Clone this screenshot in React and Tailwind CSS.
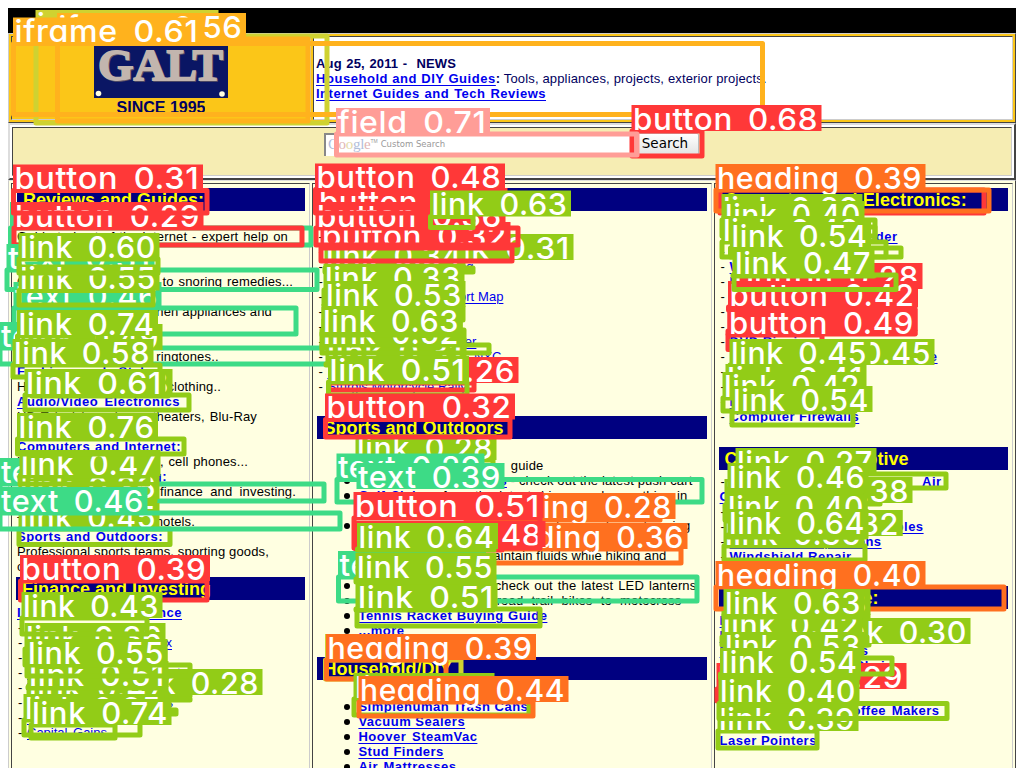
import React from "react";

const COLORS = {
  button: "#ff3838",
  link: "#92cc17",
  text: "#3ddb86",
  heading: "#ff701f",
  iframe: "#ffb21d",
  image: "#cfd231",
  field: "#ff9d97",
};
const LABEL_WIDTH = { button: 190, link: 141, text: 148, heading: 210, iframe: 189, image: 183, field: 154 };

// kind, score, x1, y1, x2, y2, painted from back to front
const DETECTIONS = [
  ["image", "0.29", 36, 36, 327, 123],
  ["iframe", "0.56", 57.5, 39, 308, 121],
  ["iframe", "0.61", 13.5, 43.5, 762.5, 114.5],
  ["button", "0.68", 632, 131, 702, 156],
  ["field", "0.71", 336.5, 134, 637, 155],

  ["text", "0.39", 10.5, 228, 311, 245],
  ["button", "0.29", 14, 228, 302, 245],
  ["button", "0.31", 13.5, 190.5, 207, 213],
  ["text", "0.31", 7, 270, 317, 289.5],
  ["text", "0.46", 14, 308, 296, 334],
  ["text", "0.35", 0, 348, 337, 364],
  ["link", "0.55", 19, 290.5, 153, 305],
  ["link", "0.60", 19, 259, 158, 273],
  ["link", "0.49", 22, 350, 95, 362],
  ["link", "0.74", 17.5, 336, 93, 349],
  ["link", "0.38", 32, 395, 168, 396],
  ["link", "0.58", 13, 365, 160, 377],
  ["link", "0.61", 25, 395, 189, 410],
  ["text", "0.39", 0, 484, 324, 501],
  ["link", "0.36", 19, 499, 155, 501],
  ["link", "0.47", 20, 476, 148, 484],
  ["link", "0.76", 17.5, 439, 184, 454],
  ["link", "0.45", 19, 529, 170, 544.5],
  ["text", "0.46", 0, 513, 340, 529],
  ["button", "0.39", 20.5, 581, 207, 600],
  ["link", "0.36", 25, 649, 165, 665],
  ["link", "0.43", 22, 618, 147, 634],
  ["link", "0.28", 122, 695, 190, 696],
  ["link", "0.37", 27, 710, 176, 714],
  ["link", "0.47", 28, 699, 190, 700],
  ["link", "0.51", 28, 687, 160, 688],
  ["link", "0.55", 27, 665, 190, 676],
  ["link", "0.35", 24, 720, 140, 735],
  ["link", "0.74", 31, 725, 115, 738],

  ["button", "0.42", 318, 214, 505, 214],
  ["link", "0.31", 433, 260, 512, 260],
  ["link", "0.34", 325, 268, 473, 272],
  ["button", "0.32", 321, 248, 512, 261],
  ["button", "0.36", 316, 228, 518, 245],
  ["button", "0.48", 315.5, 189.5, 503, 213],
  ["link", "0.63", 430.5, 216.5, 473, 227.5],
  ["link", "0.41", 322, 330, 464, 348],
  ["link", "0.33", 324, 290, 462, 305],
  ["link", "0.53", 325, 307, 463, 320],
  ["link", "0.31", 326, 364, 491, 365],
  ["link", "0.52", 322, 345, 489, 353],
  ["link", "0.63", 322, 333, 463, 335],
  ["button", "0.26", 329, 383, 474, 390],
  ["link", "0.51", 328.5, 382, 467, 395],
  ["link", "0.28", 356, 460, 493, 466],
  ["button", "0.32", 325.5, 419.5, 510, 437],
  ["text", "0.29", 337, 479.5, 702, 502],
  ["text", "0.39", 357, 489, 501, 489],
  ["heading", "0.28", 466, 519, 660, 520],
  ["heading", "0.36", 478, 549, 681, 563],
  ["button", "0.48", 356, 547, 502, 550],
  ["button", "0.51", 354, 518, 540, 548],
  ["text", "0.35", 338.5, 577, 697, 601],
  ["link", "0.54", 356, 609, 493, 610],
  ["link", "0.51", 357, 609, 540, 626],
  ["link", "0.55", 356, 579, 494, 582],
  ["link", "0.64", 357.5, 549, 494, 550],
  ["image", "0.31", 325.5, 660, 461, 679],
  ["heading", "0.39", 326.5, 660, 446, 679],
  ["link", "0.28", 354, 699, 529, 715],
  ["heading", "0.44", 359, 702, 533, 716],

  ["button", "0.34", 720, 190, 984, 213],
  ["heading", "0.39", 716, 190, 989, 211],
  ["link", "0.29", 722, 220, 875, 236],
  ["link", "0.40", 724, 227, 875, 241],
  ["link", "0.42", 722, 242, 886, 257],
  ["button", "0.28", 733, 289, 915, 290],
  ["link", "0.47", 733, 275, 874, 276],
  ["link", "0.54", 730.5, 248, 901, 257],
  ["button", "0.34", 728, 331, 915, 334],
  ["button", "0.42", 728.5, 307, 913, 310],
  ["link", "0.47", 734, 275, 896, 289.5],
  ["button", "0.49", 728, 335, 822, 349.5],
  ["link", "0.45", 794, 365, 850, 365],
  ["link", "0.45", 730, 365, 862, 367],
  ["link", "0.41", 726, 390, 863, 395],
  ["link", "0.42", 723, 398, 855, 411],
  ["link", "0.54", 732, 412, 853, 425],
  ["link", "0.27", 736, 474, 946, 488],
  ["link", "0.38", 772, 503, 880, 504],
  ["link", "0.42", 725, 505, 865, 520],
  ["link", "0.36", 724, 546, 865, 560],
  ["link", "0.32", 762, 536, 913, 530],
  ["link", "0.40", 727, 519, 880, 521],
  ["link", "0.32", 762, 536, 866, 537],
  ["link", "0.64", 728, 535, 860, 537],
  ["link", "0.46", 728, 489, 862, 492],
  ["heading", "0.40", 716, 587, 1004, 609],
  ["link", "0.33", 730, 615, 868, 618],
  ["link", "0.30", 830, 644, 869, 645],
  ["link", "0.42", 722, 637, 867, 645],
  ["link", "0.63", 724, 615, 861, 617],
  ["button", "0.29", 717, 689, 850, 701],
  ["link", "0.53", 724, 658, 892, 674],
  ["link", "0.54", 720.5, 674, 858, 678],
  ["link", "0.39", 718, 731, 817, 748],
  ["link", "0.40", 719, 703.5, 947, 718.5],
];

function Detection({ kind, score, x1, y1, x2, y2 }) {
  const c = COLORS[kind];
  const w = LABEL_WIDTH[kind];
  return (
    <g>
      <rect x={x1} y={y1} width={Math.max(x2 - x1, 0)} height={Math.max(y2 - y1, 0)} fill="none" stroke={c} strokeWidth="5" strokeLinejoin="round" />
      <rect x={x1 - 0.5} y={y1 - 26} width={w} height="26" fill={c} />
      <text
        x={x1 + 1}
        y={y1 - 1.5}
        textLength={w - 5}
        lengthAdjust="spacingAndGlyphs"
        fill="#fff"
        className="font-['Inter',sans-serif] text-[30.5px] font-medium tracking-[0.6px] [font-feature-settings:'cv11'] [word-spacing:6px]"
      >
        {kind} {score}
      </text>
    </g>
  );
}

const L = "font-bold text-[#0000ee] underline underline-offset-2";
const P = "text-[#0000ee] underline underline-offset-2";

function Row({ children, w, dash, bullet, link, thin }) {
  return (
    <div className="flex h-[15px] items-center whitespace-nowrap text-[13px] leading-[15px]">
      {dash && <span className="w-[10px] shrink-0 pl-px">-</span>}
      {bullet && <span className="mr-[8px] ml-[27px] size-[6px] shrink-0 rounded-full bg-black" />}
      {bullet === false && <span className="w-[41px] shrink-0" />}
      <span
        className={`block shrink-0 [text-align-last:justify] ${link ? `${L} tracking-[0.5px]` : thin ? P : "tracking-[0.15px]"}`}
        style={{ width: w || "auto" }}
      >
        {children}
      </span>
    </div>
  );
}

function Band({ children, className = "" }) {
  return (
    <h2 className={`flex h-[23px] items-center bg-[#000080] pt-px pl-[6px] text-[18px] leading-[22px] font-bold whitespace-nowrap text-[#ffff00] ${className}`}>
      {children}
    </h2>
  );
}

const CELL = "border border-t-[#444] border-r-[#ccc] border-b-[#ccc] border-l-[#444]";

export default function App() {
  return (
    <div className="relative h-[768px] w-[1024px] overflow-hidden bg-white px-2 pt-2 font-['Liberation_Sans',Arial,sans-serif] text-black">
      <div className="h-[25px] bg-black" />
      <header className="flex h-[90px] gap-[2px] border border-t-[#ccc] border-r-[#444] border-b-[#444] border-l-[#ccc] bg-[#fbc618] p-[2px]">
        <div className={`flex w-[300px] flex-col items-center overflow-hidden pt-[8px] ${CELL}`}>
          <svg width="134" height="53" viewBox="0 0 134 53" className="shrink-0">
            <rect width="134" height="53" fill="#0a1664" />
            <text x="5" y="36" textLength="125" lengthAdjust="spacingAndGlyphs" fill="#5b5364" stroke="#5b5364" strokeWidth="1.5" className="font-['Liberation_Serif',serif] text-[44px] font-bold">GALT</text>
            <text x="4" y="34.5" textLength="125" lengthAdjust="spacingAndGlyphs" fill="#c2b5ae" stroke="#c2b5ae" strokeWidth="1.8" className="font-['Liberation_Serif',serif] text-[44px] font-bold">GALT</text>
            <circle cx="4.5" cy="48.5" r="2.8" fill="#ffffe1" />
            <circle cx="128" cy="49" r="2.8" fill="#ffffe1" />
          </svg>
          <div className="h-[14px] shrink-0 overflow-hidden text-[16px] leading-[19px] font-bold text-[#000060]">SINCE 1995</div>
        </div>
        <div className={`flex-1 bg-white pt-[19px] pl-[2px] text-[#000060] ${CELL}`}>
          <Row w={140}><b>Aug 25, 2011 -&nbsp; NEWS</b></Row>
          <Row w={450}><a className={`${L} tracking-[0.55px]`}>Household and DIY Guides</a><b>:</b> Tools, appliances, projects, exterior projects.</Row>
          <Row w={230} link>Internet Guides and Tech Reviews</Row>
        </div>
      </header>
      <div className="h-[57px] border-2 border-t-[#ddd] border-r-[#444] border-b-[#444] border-l-[#ddd] bg-white p-[2px]">
        <div className={`flex h-full items-start bg-[#f6edb3] pt-[5px] pl-[311px] ${CELL}`}>
          <div className="flex h-[23px] w-[306px] items-center border-t-2 border-l-2 border-[#888] bg-white pb-[3px] pl-[2px]">
            <span className="font-['Liberation_Serif',serif] text-[15px] tracking-[-0.3px] text-[#b0bddb]">
              G<span className="text-[#dfb5b5]">o</span><span className="text-[#e4dba6]">o</span>gl<span className="text-[#dfb5b5]">e</span>
            </span>
            <span className="mb-[5px] text-[5px] text-[#999]">TM</span>
            <span className="ml-[3px] font-['DejaVu_Sans',sans-serif] text-[8.5px] text-[#999]">Custom Search</span>
          </div>
          <button className="ml-[1px] h-[22px] w-[68px] rounded-[2px] border border-[#bbb] bg-linear-to-b from-white to-[#e4e4e4] pb-[3px] font-['DejaVu_Sans',sans-serif] text-[13.5px] leading-[18px]">Search</button>
        </div>
      </div>
      <main className="flex h-[640px] gap-[2px] border-t border-r border-l border-t-[#ddd] border-r-[#444] border-l-[#ccc] bg-[#ffffe1] px-[2px] pt-[2px]">
        <section className={`w-[300px] pt-[4px] pr-[4px] pl-[5px] ${CELL}`}>
          <Band>Reviews and Guides:</Band>
          <div className="pt-[18px]">
            <Row w={271}>Guide to best of the internet - expert help on</Row>
            <Row w={130} link>Health and Beauty:</Row>
            <Row w={130} link>Health and Fitness</Row>
            <Row w={276}>Guides: acne treatment to snoring remedies...</Row>
            <Row w={130} link>Home and Garden:</Row>
            <Row w={255}>Guides to tools and kitchen appliances and</Row>
            <Row>furniture..</Row>
            <Row w={76} link>Cell Phones</Row>
            <Row w={200}>Cell phones, plans and ringtones..</Row>
            <Row w={140} link>Fashion and Style:</Row>
            <Row w={204}>Handbags, shoes and clothing..</Row>
            <Row w={163} link>Audio/Video Electronics</Row>
            <Row w={240}>HD Televisions, home theaters, Blu-Ray</Row>
            <Row>players..</Row>
            <Row w={164} link>Computers and Internet:</Row>
            <Row w={231}>Laptops, GPS, monitors, cell phones...</Row>
            <Row w={150} link>Finance &amp; Investing:</Row>
            <Row w={279}>Learn the facts about finance and investing.</Row>
            <Row w={50} link>Travel:</Row>
            <Row w={178}>Travel guides, air and hotels.</Row>
            <Row w={146} link>Sports and Outdoors:</Row>
            <Row w={251}>Professional sports teams, sporting goods,</Row>
            <Row>outdoors..</Row>
          </div>
          <Band className="mt-[3px] -ml-px">Finance and Investing</Band>
          <div className="pt-[5px]">
            <Row w={165} link>Investing and Finance</Row>
            <Row w={124} dash thin>Municipal Bonds 101</Row>
            <Row w={145} dash thin>Stock Volatility Index</Row>
            <Row w={130} dash thin>Mutual Funds</Row>
            <Row w={160} dash thin>Real Estate Investments</Row>
            <Row w={120} dash thin>Treasury Bonds</Row>
            <Row w={146} dash thin>Exchange Funds</Row>
            <Row w={100} dash thin>Annuities</Row>
            <Row w={80} dash thin>Capital Gains</Row>
          </div>
        </section>
        <section className={`w-[400px] pt-[4px] pr-[4px] pl-[4px] ${CELL}`}>
          <Band>Travel and Leisure</Band>
          <div className="pt-[18px]">
            <Row w={150} dash thin>Travel Guides</Row>
            <Row w={140} dash thin>Cruise Reviews</Row>
            <Row w={146} dash thin>Discount Traveling</Row>
            <Row w={130} dash thin>Beach Resorts</Row>
            <Row w={176} dash thin>Caribbean Islands Airport Map</Row>
            <Row w={120} dash thin>Ski Vacations</Row>
            <Row w={120} dash thin>Las Vegas</Row>
            <Row w={149} dash thin>Alaska Cruise Finder</Row>
            <Row w={174} dash thin>Hotels and tours in NYC</Row>
            <Row w={120} dash thin>Hawaii Guide</Row>
            <Row w={138} dash thin>Sturgis Motorcycle Rally</Row>
          </div>
          <Band className="mt-[22px]">Sports and Outdoors</Band>
          <div className="pt-[19px]">
            <Row w={185} bullet>Baseball gloves buying guide</Row>
            <Row w={332} bullet><a className={L}>Lightweight Push Carts</a> - check out the latest push cart</Row>
            <Row w={329} bullet><a className={L}>Golf Clubs</a> - from the latest drivers and everything in</Row>
            <Row w={60} bullet={false}>between</Row>
            <Row w={332} bullet><a className={L}>Camping Tents</a> - what to look for when choosing</Row>
            <Row w={60} bullet={false}>tents</Row>
            <Row w={308} bullet><a className={L}>Hydration Pack</a> - to maintain fluids while hiking and</Row>
            <Row w={60} bullet={false}>biking</Row>
            <Row w={338} bullet><a className={L}>LED Camp Lantern</a> - check out the latest LED lanterns</Row>
            <Row w={323} bullet><a className={L}>Mountain Bikes</a> - offroad trail bikes to motocross</Row>
            <Row w={189} bullet link>Tennis Racket Buying Guide</Row>
            <Row w={46} bullet link>...more</Row>
          </div>
          <Band className="mt-[19px]">Household/DIY</Band>
          <div className="pt-[19px]">
            <Row w={168} bullet link>Simplehuman Trash Cans</Row>
            <Row w={106} bullet link>Vacuum Sealers</Row>
            <Row w={119} bullet link>Hoover SteamVac</Row>
            <Row w={85} bullet link>Stud Finders</Row>
            <Row w={98} bullet link>Air Mattresses</Row>
          </div>
        </section>
        <section className={`w-[300px] pt-[4px] pr-[4px] pl-[4px] ${CELL}`}>
          <Band><span className="tracking-[0.08px]">Computers and Electronics:</span></Band>
          <div className="pt-[18px] pl-px">
            <Row w={168} dash link>Digital Photo Reader</Row>
            <Row w={140} dash link>Laptop Computers</Row>
            <Row w={135} dash link>Wireless Routers</Row>
            <Row w={145} dash link>External Hard Drive</Row>
            <Row w={130} dash link>Flash Drives</Row>
            <Row w={130} dash link>LCD Monitors</Row>
            <Row w={130} dash link>Web Hosting</Row>
            <Row w={85} dash link>DVD Ripping</Row>
            <Row w={208} dash link>Digital Camera Pro Software</Row>
            <Row w={120} dash link>GPS Systems</Row>
            <Row w={120} dash link>Laser Printers</Row>
            <Row w={120} dash link>Inkjet Printers</Row>
            <Row w={129} dash link>Computer Firewalls</Row>
          </div>
          <Band className="mt-[23px]"><span className="w-[184px] [text-align-last:justify]">Classic Automotive</span></Band>
          <div className="pt-[4px] pl-px">
            <Row w={212} dash link>Portable Compact Station Air</Row>
            <Row w={90} link>Compressors</Row>
            <Row w={120} dash link>Car Batteries</Row>
            <Row w={194} dash link>Car Battery Jumper Cables</Row>
            <Row w={152} dash link>Car Inspections</Row>
            <Row w={122} dash link>Windshield Repair</Row>
          </div>
          <Band className="mt-[22px]"><span className="w-[151px] [text-align-last:justify]">Gift Ideas &amp; More:</span></Band>
          <div className="pt-[4px] pl-px">
            <Row w={120} link>Digital Frames</Row>
            <Row w={130} link>Espresso Makers</Row>
            <Row w={149} link>Massage Chairs</Row>
            <Row w={171} link>Zero Gravity Chair</Row>
            <Row w={110} link>Wine Coolers</Row>
            <Row w={120} link>Bread Machines</Row>
            <Row w={220} link>Single Serve Pod Coffee Makers</Row>
            <Row w={80} link>Telescopes</Row>
            <Row w={97} link>Laser Pointers</Row>
          </div>
        </section>
      </main>
      <svg className="pointer-events-none absolute top-0 left-0" width="1024" height="768" viewBox="0 0 1024 768">
        {DETECTIONS.map(([kind, score, x1, y1, x2, y2], i) => (
          <Detection key={i} kind={kind} score={score} x1={x1} y1={y1} x2={x2} y2={y2} />
        ))}
      </svg>
    </div>
  );
}
